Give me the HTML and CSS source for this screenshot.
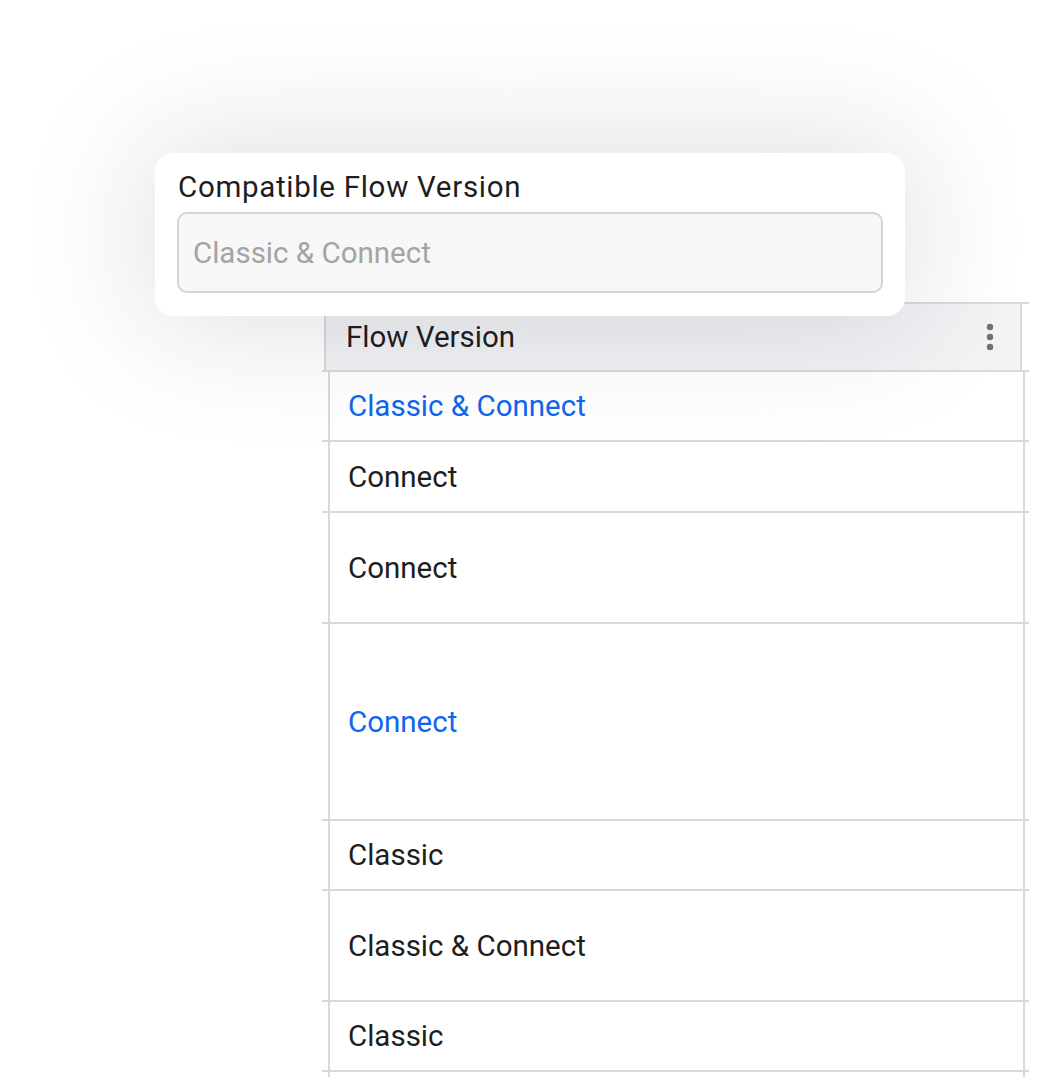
FILE: index.html
```html
<!DOCTYPE html>
<html lang="en">
<head>
<meta charset="utf-8">
<title>Flow Version</title>
<link rel="stylesheet" href="styles.css">
</head>
<body>
<main class="page">
  <section class="table">
    <div class="row head">
      <div class="cell head-cell">
        <span>Flow Version</span>
        <svg class="kebab" width="8" height="28" viewBox="0 0 8 28" aria-hidden="true">
          <circle cx="4" cy="4" r="3.2" fill="#727272"/>
          <circle cx="4" cy="14" r="3.2" fill="#727272"/>
          <circle cx="4" cy="24" r="3.2" fill="#727272"/>
        </svg>
      </div>
    </div>
    <div class="row h70"><div class="cell link">Classic &amp; Connect</div></div>
    <div class="row h71"><div class="cell">Connect</div></div>
    <div class="row h111"><div class="cell">Connect</div></div>
    <div class="row h197"><div class="cell link">Connect</div></div>
    <div class="row h70"><div class="cell">Classic</div></div>
    <div class="row h111"><div class="cell">Classic &amp; Connect</div></div>
    <div class="row h70"><div class="cell">Classic</div></div>
    <div class="row tail"><div class="cell"></div></div>
  </section>

  <div class="popover">
    <label class="pop-label" for="cfv">Compatible Flow Version</label>
    <div class="pop-input" id="cfv">Classic &amp; Connect</div>
  </div>
</main>
</body>
</html>
```

FILE: styles.css
```css
* { box-sizing: border-box; }

html, body {
  margin: 0;
  padding: 0;
  background: #ffffff;
  overflow: hidden;
}

body {
  font-family: Roboto, "Liberation Sans", Arial, sans-serif;
  color: #1e1e1e;
  width: 1058px;
  height: 1077px;
}

.page {
  position: relative;
  width: 1058px;
  height: 1077px;
  padding: 302px 0 0 322px;
  overflow: hidden;
}

.table {
  width: 707px;
  display: flex;
  flex-direction: column;
}

.row {
  display: flex;
  border-bottom: 2px solid #d9d9db;
}

.row.head {
  height: 70px;
  border-top: 2px solid #d9d9db;
}

.cell {
  flex: 1;
  display: flex;
  align-items: center;
  margin: 0 4px 0 6px;
  padding-left: 18px;
  border-left: 2px solid #d9d9db;
  border-right: 2px solid #d9d9db;
  font-size: 29.5px;
  line-height: 36px;
  color: #1e1e1e;
  background: #ffffff;
}

.head-cell {
  margin: 0 7px 0 2px;
  padding-left: 20px;
  padding-right: 26px;
  justify-content: space-between;
  background: #f2f3f5;
  color: #1e1e1e;
}

.kebab { display: block; margin-top: -1px; }

.link { color: #0f66f0; }

.h70 { height: 70px; }
.h71 { height: 71px; }
.h111 { height: 111px; }
.h197 { height: 197px; }
.tail { height: 6px; border-bottom: 0; }

.popover {
  position: absolute;
  left: 155px;
  top: 153px;
  width: 750px;
  height: 163px;
  padding: 17px 22px 23px 22px;
  background: #ffffff;
  border-radius: 18px;
  box-shadow: 0 0 130px 6px rgba(30, 30, 50, 0.15);
  display: flex;
  flex-direction: column;
  gap: 8px;
  z-index: 2;
}

.pop-label {
  font-size: 29.5px;
  line-height: 34px;
  letter-spacing: 0.7px;
  color: #1e1e1e;
  padding-left: 1px;
}

.pop-input {
  height: 81px;
  border: 2px solid #d4d4d6;
  border-radius: 10px;
  background: #f7f7f7;
  display: flex;
  align-items: center;
  padding-left: 14px;
  font-size: 29.5px;
  color: #a4a4a4;
}
```
